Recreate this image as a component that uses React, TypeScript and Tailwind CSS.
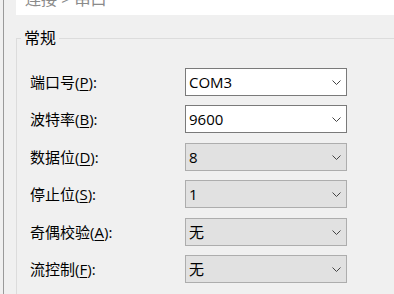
import React from "react";

type Row = {
  label: string;
  key: string;
  value: string;
  enabled: boolean;
  extra?: boolean;
};

const ROWS: Row[] = [
  { label: "端口号", key: "P", value: "COM3", enabled: true },
  { label: "波特率", key: "B", value: "9600", enabled: true },
  { label: "数据位", key: "D", value: "8", enabled: false, extra: true },
  { label: "停止位", key: "S", value: "1", enabled: false },
  { label: "奇偶校验", key: "A", value: "无", enabled: false, extra: true },
  { label: "流控制", key: "F", value: "无", enabled: false },
];

function Chevron() {
  return (
    <svg width="9" height="5" viewBox="0 0 9 5" className="shrink-0">
      <polyline points="0.5,0.5 4.5,4.5 8.5,0.5" fill="none" stroke="#444" strokeWidth="1" />
    </svg>
  );
}

function Combo({ value, enabled }: { value: string; enabled: boolean }) {
  return (
    <div
      className={
        enabled
          ? "flex h-[28px] w-[162px] items-center justify-between border border-[#7a7a7a] bg-white pl-[3px] pr-[5px]"
          : "flex h-[28px] w-[162px] items-center justify-between border border-[#adadad] bg-[#e1e1e1] pl-[3px] pr-[5px]"
      }
    >
      <span className="text-[15px] leading-none text-black">{value}</span>
      <Chevron />
    </div>
  );
}

export default function App() {
  return (
    <div
      className="flex h-[294px] w-[394px] overflow-hidden bg-[#f0f0f0]"
      style={{ fontFamily: '"Open Sans", "Noto Sans CJK SC", sans-serif' }}
    >
      <div className="h-full w-[4px] shrink-0 border-r border-[#9a9a9a]" />
      <div className="ml-[12px] w-[420px] shrink-0">
        <div className="h-[15px] overflow-hidden bg-white pl-[9px]">
          <div className="-mt-[9px] text-[16px] leading-none text-[#8a8a8a]">连接 &gt; 串口</div>
        </div>

        <fieldset className="mt-[15px] border border-[#dcdcdc] pb-[40px] pl-[13px]">
          <legend className="-ml-[9px] px-[3px] text-[16px] leading-[16px] text-black">常规</legend>
          <div className="mt-[22px] flex flex-col gap-[9px]">
            {ROWS.map((r) => (
              <div key={r.key} className={r.extra ? "mt-px flex items-center" : "flex items-center"}>
                <div className="w-[155px] shrink-0 text-[15px] leading-none text-black">
                  {r.label}(<span className="underline underline-offset-2">{r.key}</span>):
                </div>
                <Combo value={r.value} enabled={r.enabled} />
              </div>
            ))}
          </div>
        </fieldset>
      </div>
    </div>
  );
}
